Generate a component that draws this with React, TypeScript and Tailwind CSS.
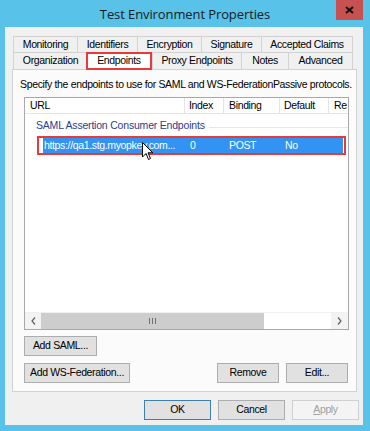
import React from "react";

const row1 = [
  { label: "Monitoring", w: 65 },
  { label: "Identifiers", w: 61 },
  { label: "Encryption", w: 65 },
  { label: "Signature", w: 61 },
  { label: "Accepted Claims", w: 92 },
];
const row2 = [
  { label: "Organization", w: 75, active: false },
  { label: "Endpoints", w: 66, active: true },
  { label: "Proxy Endpoints", w: 90, active: false },
  { label: "Notes", w: 48, active: false },
  { label: "Advanced", w: 65, active: false },
];

function Btn({ children, className = "" }: { children: React.ReactNode; className?: string }) {
  return (
    <div
      className={
        "h-[20px] flex items-center justify-center border border-[#adadad] bg-[#e1e1e1] text-black whitespace-nowrap " +
        className
      }
    >
      {children}
    </div>
  );
}

export default function App() {
  return (
    <div
      className="w-[370px] h-[431px] bg-[#58c2e8] flex flex-col overflow-hidden text-[10.5px] tracking-[-0.35px]"
      style={{ fontFamily: '"Liberation Sans", Arial, sans-serif' }}
    >
      {/* Title bar */}
      <div className="relative h-[27px] flex items-center justify-center">
        <span
          className="text-[13px] tracking-[-0.1px] text-[#1b1b1b] mt-[3px]"
          style={{ fontFamily: '"Open Sans", "Noto Sans", sans-serif' }}
        >
          Test Environment Properties
        </span>
        <div className="absolute right-[7px] top-0 w-[27px] h-[20px] bg-[#c75050] flex items-center justify-center">
          <svg width="9" height="8" viewBox="0 0 9 8">
            <path d="M1 1 L8 7 M8 1 L1 7" stroke="#111" strokeWidth="2" />
          </svg>
        </div>
      </div>

      {/* Body */}
      <div className="flex-1 ml-[5px] mr-[7px] mb-[6px] bg-[#f0f0f0] flex flex-col pt-[9px]">
        {/* Tabs */}
        <div className="ml-[8px] flex flex-col">
          <div className="flex h-[16px]">
            {row1.map((t) => (
              <div
                key={t.label}
                style={{ width: t.w }}
                className="h-[16px] -mr-px border border-b-0 border-[#d2d2d2] bg-[#f0f0f0] flex items-center justify-center whitespace-nowrap"
              >
                {t.label}
              </div>
            ))}
          </div>
          <div className="flex h-[17px] items-end relative z-10">
            {row2.map((t) =>
              t.active ? (
                <div
                  key={t.label}
                  style={{ width: t.w }}
                  className="h-[18px] -mb-px -ml-px border-2 border-[#e8393b] bg-white flex items-center justify-center whitespace-nowrap"
                >
                  {t.label}
                </div>
              ) : (
                <div
                  key={t.label}
                  style={{ width: t.w }}
                  className="h-[17px] -mr-px border border-b-0 border-[#d2d2d2] bg-[#f0f0f0] flex items-center justify-center whitespace-nowrap"
                >
                  {t.label}
                </div>
              )
            )}
          </div>
        </div>

        {/* Panel */}
        <div className="ml-[7px] mr-[6px] h-[323px] border border-[#d2d2d2] bg-[#fbfbfb] flex flex-col">
          <div className="h-[27px] pl-[7px] pt-[8px] leading-[13px] text-black whitespace-nowrap">
            Specify the endpoints to use for SAML and WS-FederationPassive protocols.
          </div>

          {/* List view */}
          <div className="ml-[11px] mr-[7px] h-[233px] border border-[#a8a8a8] bg-white flex flex-col relative overflow-hidden">
            <div className="h-[16px] flex border-b border-[#e5e5e5] whitespace-nowrap">
              <div className="w-[160px] pl-[5px] flex items-center border-r border-[#e5e5e5]">URL</div>
              <div className="w-[39px] pl-[4px] flex items-center border-r border-[#e5e5e5]">Index</div>
              <div className="w-[56px] pl-[5px] flex items-center border-r border-[#e5e5e5]">Binding</div>
              <div className="w-[49px] pl-[4px] flex items-center border-r border-[#e5e5e5]">Default</div>
              <div className="flex-1 pl-[5px] flex items-center overflow-hidden">Re</div>
            </div>
            <div className="h-[22px] flex items-end pl-[11px] pb-[2px]">
              <span className="text-[10.5px] tracking-[-0.2px] text-[#2a3d8f] whitespace-nowrap">SAML Assertion Consumer Endpoints</span>
              <div className="flex-1 h-px bg-[#e2e6ef] ml-[4px] mb-[6px]" />
            </div>
            <div className="ml-[12px] w-[309px] h-[19px] border-2 border-[#e8393b] pl-[4px] pr-[1px]">
              <div className="h-[15px] bg-[#3393f3] flex text-white whitespace-nowrap items-center">
                <div className="w-[142px] pl-[1px] overflow-hidden">https://qa1.stg.myopkey.com...</div>
                <div className="w-[39px] pl-[5px]">0</div>
                <div className="w-[56px] pl-[5px]">POST</div>
                <div className="w-[49px] pl-[5px]">No</div>
              </div>
            </div>
            <div className="flex-1" />
            {/* Horizontal scrollbar */}
            <div className="h-[17px] flex bg-[#f3f3f3] border-t border-[#f0f0f0]">
              <div className="w-[16px] flex items-center justify-center">
                <svg width="5" height="8" viewBox="0 0 5 8">
                  <path d="M4 0.5 L1 4 L4 7.5" stroke="#606060" strokeWidth="1.2" fill="none" />
                </svg>
              </div>
              <div className="w-[223px] bg-[#cdcdcd] flex items-center justify-center">
                <svg width="7" height="6" viewBox="0 0 7 6">
                  <path d="M0.5 0 V6 M3.5 0 V6 M6.5 0 V6" stroke="#707070" strokeWidth="1" />
                </svg>
              </div>
              <div className="flex-1 bg-white" />
              <div className="w-[17px] flex items-center justify-center">
                <svg width="5" height="8" viewBox="0 0 5 8">
                  <path d="M1 0.5 L4 4 L1 7.5" stroke="#606060" strokeWidth="1.2" fill="none" />
                </svg>
              </div>
            </div>

            {/* Mouse cursor */}
            <svg
              className="absolute left-[117px] top-[44px]"
              width="12"
              height="19"
              viewBox="0 0 12 19"
            >
              <path
                d="M0.5 0.5 L0.5 15 L4 11.5 L6.5 17.5 L8.5 16.5 L6 10.8 L10.8 10.8 Z"
                fill="white"
                stroke="black"
                strokeWidth="1"
              />
            </svg>
          </div>

          {/* Buttons */}
          <div className="ml-[11px] mt-[6px]">
            <Btn className="w-[73px]">Add SAML...</Btn>
          </div>
          <div className="ml-[11px] mr-[8px] mt-[7px] flex">
            <Btn className="w-[106px]">Add WS-Federation...</Btn>
            <div className="flex-1" />
            <Btn className="w-[62px]">Remove</Btn>
            <Btn className="w-[62px] ml-[7px]">Edit...</Btn>
          </div>
        </div>

        {/* Footer */}
        <div className="mt-[8px] flex justify-end mr-[4px] gap-[7px]">
          <Btn className="w-[67px] !border-[#3c7fb1]">OK</Btn>
          <Btn className="w-[67px]">Cancel</Btn>
          <div className="w-[67px] h-[20px] flex items-center justify-center border border-[#cfcfcf] bg-[#f4f4f4] text-[#a0a0a0]">
            <span className="underline">A</span>pply
          </div>
        </div>
      </div>
    </div>
  );
}
